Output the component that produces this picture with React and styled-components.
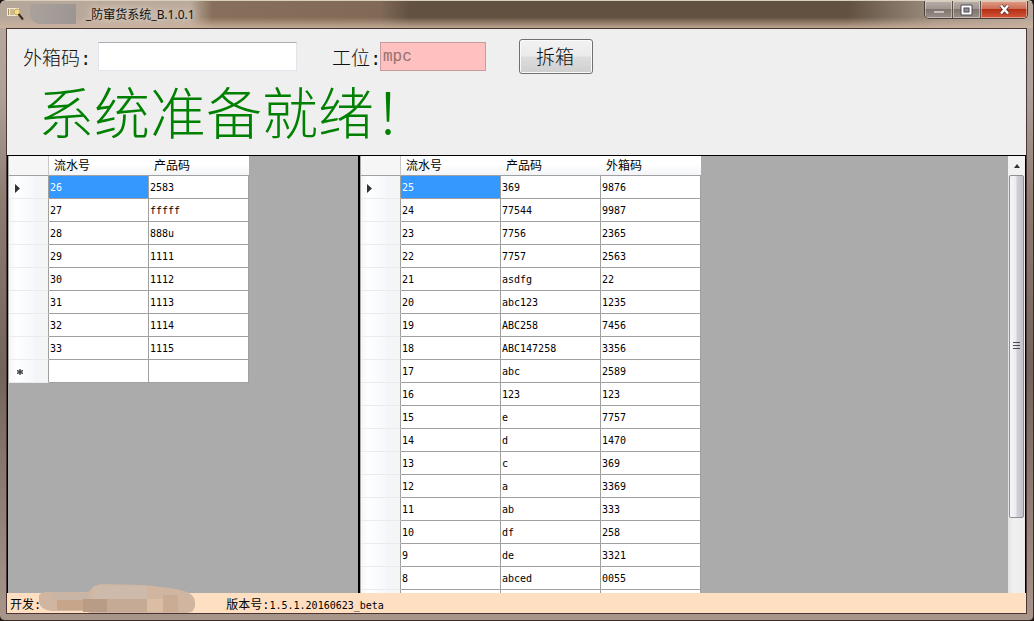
import React from 'react'
import styled, { createGlobalStyle, css } from 'styled-components';

const packing = [
  ['26', '2583'],
  ['27', 'fffff'],
  ['28', '888u'],
  ['29', '1111'],
  ['30', '1112'],
  ['31', '1113'],
  ['32', '1114'],
  ['33', '1115'],
];

const packed = [
  ['25', '369', '9876'],
  ['24', '77544', '9987'],
  ['23', '7756', '2365'],
  ['22', '7757', '2563'],
  ['21', 'asdfg', '22'],
  ['20', 'abc123', '1235'],
  ['19', 'ABC258', '7456'],
  ['18', 'ABC147258', '3356'],
  ['17', 'abc', '2589'],
  ['16', '123', '123'],
  ['15', 'e', '7757'],
  ['14', 'd', '1470'],
  ['13', 'c', '369'],
  ['12', 'a', '3369'],
  ['11', 'ab', '333'],
  ['10', 'df', '258'],
  ['9', 'de', '3321'],
  ['8', 'abced', '0055'],
  ['', '', ''],
];

const DataGrid = ({ columns, rows, newRow }) => {
  return (
    <Table>
      <thead>
        <tr>
          <Corner />
          {columns.map((name) => <HeadCell key={name} scope="col">{name}</HeadCell>)}
        </tr>
      </thead>
      <tbody>
        {rows.map((row, i) => (
          <tr key={i}>
            <RowHead>
              {i === 0 && <svg width="5" height="9" viewBox="0 0 5 9"><path d="M0 0L5 4.5L0 9z" fill="#333" /></svg>}
            </RowHead>
            {row.map((value, j) => <Cell key={j} $selected={i === 0 && j === 0}>{value}</Cell>)}
          </tr>
        ))}
        {newRow && (
          <tr>
            <RowHead $isNew>
              <svg width="6" height="6" viewBox="0 0 6 6"><path d="M3 0V6M0 1.5L6 4.5M6 1.5L0 4.5" stroke="#444" strokeWidth="1.4" /></svg>
            </RowHead>
            {columns.map((name) => <Cell key={name} />)}
          </tr>
        )}
      </tbody>
    </Table>
  )
}

const App = () => {
  return (
    <Window>
      <GlobalStyle />
      <TitleBar>
        <svg width="17" height="14" viewBox="0 0 17 14">
          <rect x="0" y="1" width="12" height="8" fill="#f3ead2" />
          <path d="M1.5 2V8M4 2V8M6 2V8" stroke="#a8895a" />
          <circle cx="10" cy="5" r="3" fill="#f1dd8c" stroke="#c9a95c" />
          <path d="M11.5 7L16 12.5" stroke="#3b2b18" strokeWidth="2" />
        </svg>
        <TitleMask />
        <Title>_防窜货系统_B.1.0.1</Title>
        <Caption>
          <CaptionButton aria-label="最小化">
            <svg width="12" height="12" viewBox="0 0 12 12"><rect x="1" y="7" width="10" height="2" fill="#c6c1bc" /></svg>
          </CaptionButton>
          <CaptionButton aria-label="最大化">
            <svg width="13" height="12" viewBox="0 0 13 12">
              <path d="M1 1H12V11H1z" fill="#fff" stroke="#4d4a58" />
              <rect x="4" y="4" width="5" height="4" fill="#938f94" stroke="#4d4a58" />
            </svg>
          </CaptionButton>
          <CaptionButton aria-label="关闭" $close>
            <svg width="13" height="11" viewBox="0 0 13 11">
              <path d="M3 1.5L10 9.5M10 1.5L3 9.5" stroke="#5a3030" strokeWidth="4" />
              <path d="M3 1.5L10 9.5M10 1.5L3 9.5" stroke="#fff" strokeWidth="2.4" />
            </svg>
          </CaptionButton>
        </Caption>
      </TitleBar>
      <Client>
        <Toolbar>
          <Fields>
            <Label htmlFor="boxCode">外箱码:</Label>
            <BoxInput id="boxCode" type="text" />
            <StationLabel htmlFor="station">工位:</StationLabel>
            <StationInput id="station" type="text" defaultValue="mpc" disabled />
            <UnpackButton type="button">拆箱</UnpackButton>
          </Fields>
          <Message>系统准备就绪！</Message>
        </Toolbar>
        <Panels>
          <LeftPanel>
            <DataGrid columns={['流水号', '产品码']} rows={packing} newRow />
          </LeftPanel>
          <RightPanel>
            <GridArea>
              <DataGrid columns={['流水号', '产品码', '外箱码']} rows={packed} />
            </GridArea>
            <ScrollBar>
              <ScrollArrow type="button" aria-label="向上">
                <svg width="6" height="4" viewBox="0 0 6 4"><path d="M3 0L6 4H0z" fill="#333" /></svg>
              </ScrollArrow>
              <Track>
                <Thumb>
                  <svg width="7" height="8" viewBox="0 0 7 8"><path d="M0 .5H7M0 3.5H7M0 6.5H7" stroke="#4c4c52" /></svg>
                </Thumb>
              </Track>
            </ScrollBar>
          </RightPanel>
        </Panels>
        <StatusBar>
          <span>开发:</span>
          <StatusMask viewBox="0 0 157 30" width="157" height="30">
            <path d="M0 12Q4 8 14 9L50 9Q54 2 62 1L104 2Q140 5 150 10Q157 14 156 22Q156 29 148 30H52L44 28H12Q0 26 0 18z" fill="#d0b5a0" />
            <rect x="14" y="10" width="36" height="7" fill="#c9b5a5" />
            <rect x="18" y="17" width="26" height="10" fill="#c6a58b" />
            <rect x="44" y="16" width="24" height="13" fill="#b99c85" />
            <rect x="68" y="16" width="40" height="13" fill="#c5aa96" />
            <rect x="54" y="3" width="54" height="13" fill="#cdbaaa" />
            <rect x="108" y="16" width="16" height="13" fill="#dabda3" />
            <rect x="124" y="12" width="15" height="17" fill="#c9ac93" />
          </StatusMask>
          <Version><span>版本号:</span>1.5.1.20160623_beta</Version>
        </StatusBar>
      </Client>
    </Window>
  )
}

export default App;

const GlobalStyle = createGlobalStyle`
*{
  box-sizing: border-box;
}
body{
  margin: 0;
  background: #1c1412;
}
`;

const Window = styled.div`
height: 100vh;
display: flex;
flex-direction: column;
padding: 0 6px 6px;
border: 1px solid #3a2c26;
border-top-color: #d9d0bb;
border-left-width: 0;
border-radius: 6px 6px 5px 5px;
background: linear-gradient(#b8a99c, #aea198 15%, #8d7c70 32%, #73645b 60%, #a8968a);
overflow: hidden;
`;

const TitleBar = styled.header`
flex: none;
display: flex;
align-items: center;
height: 27px;
margin: 0 -6px;
padding: 0 5px 2px 7px;
background:
  linear-gradient(transparent 60%, rgba(205, 180, 158, 0.85)),
  linear-gradient(90deg, #b5a69a 0, #bcab9c 190px, #87705b 212px, #806a56 380px, #625040 410px, #625140 82%, #a09184 91%, #b5a79b);
svg{
  flex: none;
}
`;

const TitleMask = styled.div`
width: 46px;
height: 20px;
margin-left: 6px;
border-radius: 4px 0 0 10px;
background: linear-gradient(90deg, #aaa19b, #9c9693);
`;

const Title = styled.h1`
margin: 0 0 0 10px;
font: 12px "Noto Sans", "Noto Sans CJK SC", sans-serif;
color: #111;
white-space: nowrap;
text-shadow: 0 0 6px #e8dcd0, 0 0 8px #e8dcd0;
`;

const Caption = styled.div`
align-self: flex-start;
display: flex;
margin-left: auto;
border: 1px solid #4c3f3a;
border-top: 0;
border-radius: 0 0 5px 5px;
overflow: hidden;
`;

const CaptionButton = styled.button`
display: flex;
align-items: center;
justify-content: center;
width: 28px;
height: 17px;
padding: 0;
border: 0;
border-right: 1px solid #5d5049;
background: linear-gradient(#b9aea6, #a0958e 48%, #7f756f 50%, #9a8f88);
box-shadow: inset 0 0 0 1px rgba(255, 255, 255, 0.4);
${(props) => props.$close && css`
  width: 46px;
  border-right: 0;
  background: linear-gradient(#dfa08c, #cc6a52 48%, #b52f14 50%, #d2583c);
`}
`;

const Client = styled.main`
flex: 1;
min-height: 0;
display: flex;
flex-direction: column;
border: 1px solid #4c3535;
background: #efefef;
`;

const Toolbar = styled.section`
flex: none;
height: 126px;
padding: 10px 16px 0;
`;

const Fields = styled.div`
display: flex;
align-items: center;
height: 35px;
`;

const Label = styled.label`
width: 75px;
font: 300 19px "Liberation Mono", "Noto Sans CJK SC", monospace;
white-space: nowrap;
color: #111;
`;

const StationLabel = styled(Label)`
width: 48px;
margin-left: 35px;
`;

const BoxInput = styled.input`
width: 199px;
height: 29px;
padding: 0 2px;
border: 1px solid #e2e3ea;
border-top-color: #abadb3;
background: #fff;
font: 16px "Liberation Mono", "Noto Sans CJK SC", monospace;
`;

const StationInput = styled(BoxInput)`
width: 106px;
border-color: #c99a9e;
background: #ffc0c0;
color: #94706f;
`;

const UnpackButton = styled.button`
width: 74px;
height: 35px;
margin-left: 33px;
padding: 0 2px 2px 0;
border: 1px solid #707070;
border-radius: 3px;
background: linear-gradient(#f2f2f2, #ebebeb 49%, #dddddd 51%, #cfcfcf);
box-shadow: inset 0 0 0 1px #fafafa;
font: 300 19px "Noto Sans CJK SC", sans-serif;
color: #111;
`;

const Message = styled.p`
margin: 0;
padding-left: 15px;
font: 300 56px/72px "Noto Sans CJK SC", sans-serif;
color: #008000;
white-space: nowrap;
`;

const Panels = styled.div`
flex: 1;
min-height: 0;
display: flex;
background: #ababab;
border-top: 1px solid #000;
border-right: 1px solid #000;
`;

const LeftPanel = styled.section`
flex: none;
width: 353px;
border-left: 1px solid #000;
border-right: 2px solid #000;
padding-left: 1px;
overflow: hidden;
`;

const RightPanel = styled.section`
flex: 1;
min-width: 0;
display: flex;
padding-left: 1px;
`;

const GridArea = styled.div`
flex: 1;
min-width: 0;
overflow: hidden;
`;

const Table = styled.table`
table-layout: fixed;
width: min-content;
border-collapse: separate;
border-spacing: 0;
font: 10px "DejaVu Sans Mono", "Noto Sans CJK SC", monospace;
color: #000;
`;

const Corner = styled.td`
width: 40px;
height: 20px;
padding: 0;
border-right: 1px solid #c8c8c8;
border-bottom: 1px solid #a0a0a0;
background: #f6f6f6;
`;

const HeadCell = styled.th`
width: 100px;
height: 20px;
padding: 1px 5px 0;
border-bottom: 1px solid #a0a0a0;
background: linear-gradient(#fff 45%, #f3f4f6);
font-size: 12px;
line-height: 18px;
font-weight: 400;
text-align: left;
`;

const RowHead = styled.td`
width: 40px;
height: 23px;
padding: 2px 0 0 ${(props) => (props.$isNew ? '8px' : '6px')};
border-right: 1px solid #a0a0a0;
border-bottom: 1px solid #e9ebee;
background: linear-gradient(90deg, #f6f6f7, #fff 20%, #f3f6f9 70%, #f5f5f5);
svg{
  display: block;
}
`;

const Cell = styled.td`
width: 100px;
height: 23px;
padding: 2px 1px 0;
border-right: 1px solid #a0a0a0;
border-bottom: 1px solid #a0a0a0;
background: ${(props) => (props.$selected ? '#3399ff' : '#fff')};
color: ${(props) => (props.$selected ? '#fff' : '#000')};
line-height: 14px;
white-space: nowrap;
`;

const ScrollBar = styled.div`
flex: none;
display: flex;
flex-direction: column;
width: 17px;
background: linear-gradient(90deg, #e3e3e3, #f0f0f0 30%, #ededed);
`;

const ScrollArrow = styled.button`
display: flex;
align-items: center;
justify-content: center;
height: 19px;
padding: 0;
border: 0;
background: #f2f2f2;
`;

const Track = styled.div`
flex: 1;
padding: 0 1px;
`;

const Thumb = styled.div`
display: flex;
align-items: center;
justify-content: center;
height: 82%;
border: 1px solid #8f8f95;
border-radius: 2px;
background: linear-gradient(90deg, #f6f6f7, #ececf0 45%, #cfcfd7 55%, #c2c2cb);
`;

const StatusBar = styled.footer`
flex: none;
display: flex;
align-items: center;
height: 20px;
padding-left: 3px;
background: #ffdfc1;
font: 10px "DejaVu Sans Mono", "Noto Sans CJK SC", monospace;
color: #000;
span{
  font-size: 12px;
}
`;

const StatusMask = styled.svg`
flex: none;
margin: -10px 0 0 -2px;
`;

const Version = styled.p`
margin: 0 0 0 30px;
white-space: nowrap;
`;
